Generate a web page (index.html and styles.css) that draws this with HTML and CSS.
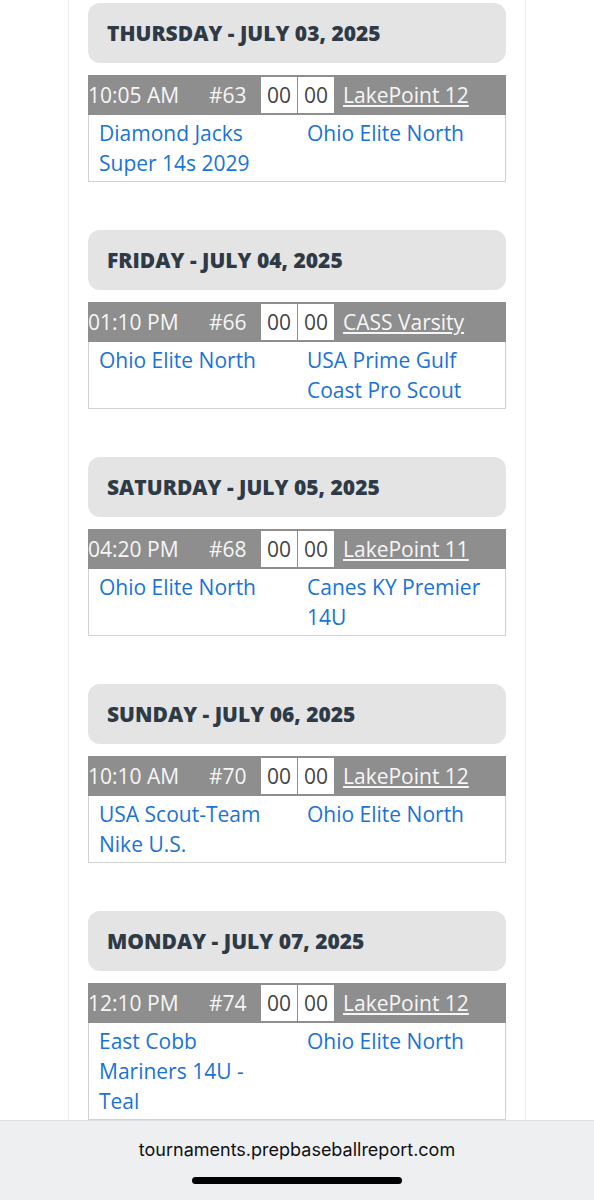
FILE: index.html
```html
<!DOCTYPE html>
<html lang="en">
<head>
  <meta charset="UTF-8">
  <title>Schedule - Ohio Elite North</title>
  <link rel="stylesheet" href="styles.css">
</head>
<body>

<div class="schedule-container">

  <div class="day-block">
    <div class="day-header">THURSDAY - JULY 03, 2025</div>
    <div class="game">
      <div class="game-bar">
        <span class="game-time">10:05 AM</span>
        <span class="game-num">#63</span>
        <span class="score">00</span><span class="score">00</span>
        <a class="field" href="#">LakePoint 12</a>
      </div>
      <div class="game-teams">
        <a href="#">Diamond Jacks Super 14s 2029</a>
        <a href="#">Ohio Elite North</a>
      </div>
    </div>
  </div>

  <div class="day-block">
    <div class="day-header">FRIDAY - JULY 04, 2025</div>
    <div class="game">
      <div class="game-bar">
        <span class="game-time">01:10 PM</span>
        <span class="game-num">#66</span>
        <span class="score">00</span><span class="score">00</span>
        <a class="field" href="#">CASS Varsity</a>
      </div>
      <div class="game-teams">
        <a href="#">Ohio Elite North</a>
        <a href="#">USA Prime Gulf Coast Pro Scout</a>
      </div>
    </div>
  </div>

  <div class="day-block">
    <div class="day-header">SATURDAY - JULY 05, 2025</div>
    <div class="game">
      <div class="game-bar">
        <span class="game-time">04:20 PM</span>
        <span class="game-num">#68</span>
        <span class="score">00</span><span class="score">00</span>
        <a class="field" href="#">LakePoint 11</a>
      </div>
      <div class="game-teams">
        <a href="#">Ohio Elite North</a>
        <a href="#">Canes KY Premier 14U</a>
      </div>
    </div>
  </div>

  <div class="day-block">
    <div class="day-header">SUNDAY - JULY 06, 2025</div>
    <div class="game">
      <div class="game-bar">
        <span class="game-time">10:10 AM</span>
        <span class="game-num">#70</span>
        <span class="score">00</span><span class="score">00</span>
        <a class="field" href="#">LakePoint 12</a>
      </div>
      <div class="game-teams">
        <a href="#">USA Scout-Team Nike U.S.</a>
        <a href="#">Ohio Elite North</a>
      </div>
    </div>
  </div>

  <div class="day-block">
    <div class="day-header">MONDAY - JULY 07, 2025</div>
    <div class="game">
      <div class="game-bar">
        <span class="game-time">12:10 PM</span>
        <span class="game-num">#74</span>
        <span class="score">00</span><span class="score">00</span>
        <a class="field" href="#">LakePoint 12</a>
      </div>
      <div class="game-teams">
        <a href="#">East Cobb Mariners 14U - Teal</a>
        <a href="#">Ohio Elite North</a>
      </div>
    </div>
  </div>

</div>

<!-- Browser address bar -->
<div class="url-bar">
  <div class="url-text">tournaments.prepbaseballreport.com</div>
  <div class="home-indicator"></div>
</div>

</body>
</html>
```

FILE: styles.css
```css
body {
  margin: 0;
  background: #fff;
  font-family: "Open Sans", sans-serif;
}

.schedule-container {
  width: 418px;
  margin-left: 68px;
  padding: 3px 19px 0;
  border-left: 1px solid #ebebeb;
  border-right: 1px solid #ebebeb;
}

.day-block {
  margin-bottom: 48px;
}

.day-header {
  height: 60px;
  display: flex;
  align-items: center;
  padding-left: 19px;
  background: #e4e4e4;
  border-radius: 12px;
  color: #2e3a46;
  font-size: 21px;
  font-weight: 800;
  margin-bottom: 12px;
}

.game {
  border: 1px solid #d2d2d2;
  border-top: none;
}

.game-bar {
  height: 40px;
  margin: 0 -1px;
  display: flex;
  align-items: center;
  background: #8e8e8e;
  color: #f6f6f6;
  font-size: 21px;
}

.game-time {
  width: 121px;
}

.game-num {
  width: 52px;
}

.score {
  width: 36px;
  height: 36px;
  margin-right: 1px;
  display: flex;
  align-items: center;
  justify-content: center;
  background: #fff;
  color: #444;
}

.field {
  margin-left: 8px;
  color: #f6f6f6;
  text-decoration: underline;
}

.game-teams {
  display: grid;
  grid-template-columns: 1fr 1fr;
  padding: 3px 0 3px;
}

.game-teams a {
  padding: 0 12px 0 10px;
  color: #1a73d8;
  text-decoration: none;
  font-size: 21px;
  line-height: 30px;
}

.url-bar {
  position: fixed;
  left: 0;
  right: 0;
  bottom: 0;
  height: 79px;
  background: #eeeff1;
  border-top: 1px solid #dedfe2;
  display: flex;
  flex-direction: column;
  align-items: center;
}

.url-text {
  margin-top: 18px;
  font-family: Inter, "Liberation Sans", sans-serif;
  font-size: 18px;
  color: #111;
}

.home-indicator {
  margin-top: 17px;
  width: 210px;
  height: 7px;
  border-radius: 4px;
  background: #000;
}
```
